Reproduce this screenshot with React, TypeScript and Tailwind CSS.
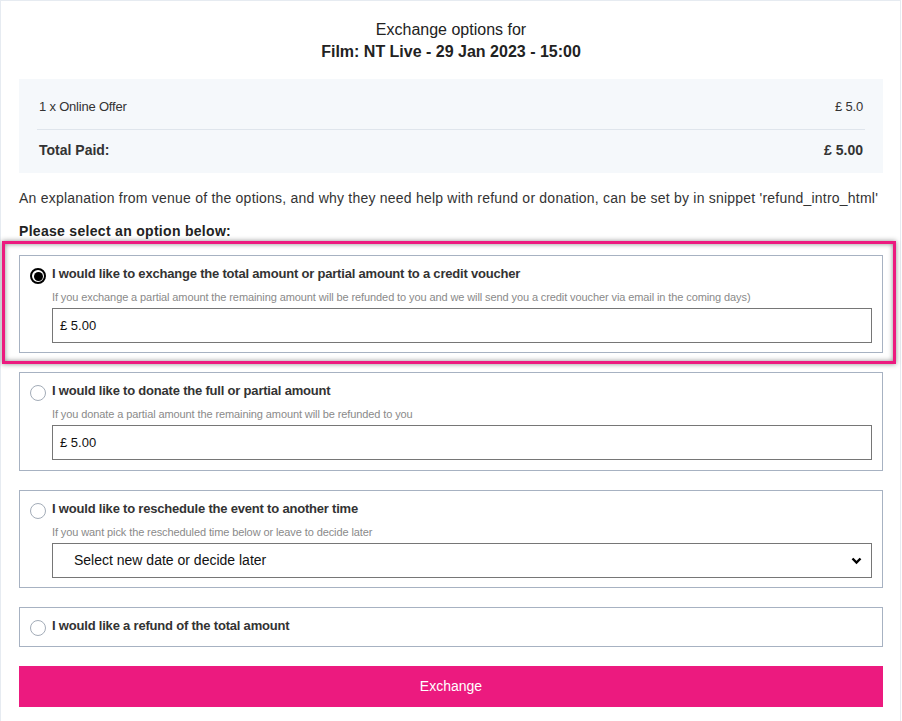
import React from "react";

const font = { fontFamily: '"Liberation Sans", Arial, sans-serif' };

function Radio({ checked }: { checked?: boolean }) {
  if (checked) {
    return (
      <span className="mt-[2px] flex h-[16px] w-[16px] shrink-0 items-center justify-center rounded-full border-2 border-black bg-white">
        <span className="h-[9px] w-[9px] rounded-full bg-black" />
      </span>
    );
  }
  return <span className="mt-[2px] h-[16px] w-[16px] shrink-0 rounded-full border border-[#a3acb8] bg-white" />;
}

function OptionHead({ label, checked }: { label: string; checked?: boolean }) {
  return (
    <div className="flex items-start gap-[6px]">
      <Radio checked={checked} />
      <span className="text-[13px] font-bold leading-[16px] tracking-[-0.2px] text-[#333]">{label}</span>
    </div>
  );
}

function Sub({ text }: { text: string }) {
  return <div className="mt-[5px] pl-[22px] text-[11px] leading-[16px] tracking-[-0.1px] text-[#8a8a8a]">{text}</div>;
}

function AmountInput() {
  return (
    <div className="ml-[22px] mt-[3px] flex h-[35px] items-center border border-[#767676] bg-white pl-[7px] text-[13px] text-[#111]">
      £ 5.00
    </div>
  );
}

export default function App() {
  return (
    <div className="min-h-[721px] w-[901px] border-l border-r border-t border-[#e6ebf1] bg-white pb-[15px] pl-[18px] pr-[17px]" style={font}>
      <div className="pt-[18px] text-center text-[16px] leading-[22px] text-[#222]">
        <div>Exchange options for</div>
        <div className="font-bold">Film: NT Live - 29 Jan 2023 - 15:00</div>
      </div>

      <div className="mt-[16px] bg-[#f5f8fb] px-[18px] pb-[13px] pt-[18px] text-[#333]">
        <div className="flex justify-between px-[2px] pb-[12px] text-[13px] leading-[20px] tracking-[-0.2px]">
          <span>1 x Online Offer</span>
          <span>£ 5.0</span>
        </div>
        <div className="border-t border-[#dfe5ec]" />
        <div className="mt-[10px] flex justify-between px-[2px] text-[14px] font-bold leading-[20px]">
          <span>Total Paid:</span>
          <span>£ 5.00</span>
        </div>
      </div>

      <p className="mt-[15px] text-[14px] leading-[20px] tracking-[0.22px] text-[#333]">
        An explanation from venue of the options, and why they need help with refund or donation, can be set by in snippet 'refund_intro_html'
      </p>
      <div className="mt-[13px] text-[14px] font-bold leading-[20px] tracking-[0.3px] text-[#222]">Please select an option below:</div>

      <div className="mt-[14px] flex flex-col gap-[19px]">
        <div className="relative">
          <div className="border border-[#a7b2c2] px-[10px] pb-[9px] pt-[10px]">
            <OptionHead checked label="I would like to exchange the total amount or partial amount to a credit voucher" />
            <Sub text="If you exchange a partial amount the remaining amount will be refunded to you and we will send you a credit voucher via email in the coming days)" />
            <AmountInput />
          </div>
          <div className="pointer-events-none absolute -bottom-[11px] -left-[17px] -right-[13px] -top-[14px] border-[3px] border-[#ec1a7f] shadow-[0_0_5px_rgba(0,0,0,0.45),inset_0_0_5px_rgba(0,0,0,0.45)]" />
        </div>

        <div className="border border-[#a7b2c2] px-[10px] pb-[10px] pt-[10px]">
          <OptionHead label="I would like to donate the full or partial amount" />
          <Sub text="If you donate a partial amount the remaining amount will be refunded to you" />
          <AmountInput />
        </div>

        <div className="border border-[#a7b2c2] px-[10px] pb-[9px] pt-[10px]">
          <OptionHead label="I would like to reschedule the event to another time" />
          <Sub text="If you want pick the rescheduled time below or leave to decide later" />
          <div className="ml-[22px] mt-[3px] flex h-[35px] items-center justify-between border border-[#767676] bg-white pl-[21px] pr-[9px] text-[14px] text-[#111]">
            <span>Select new date or decide later</span>
            <svg width="11" height="8" viewBox="0 0 11 8">
              <path d="M1.5 1.5l4 4 4-4" fill="none" stroke="#000" strokeWidth="2.4" />
            </svg>
          </div>
        </div>

        <div className="border border-[#a7b2c2] px-[10px] pb-[10px] pt-[10px]">
          <OptionHead label="I would like a refund of the total amount" />
        </div>

        <button className="flex h-[41px] w-full items-center justify-center bg-[#ec1a7f] text-[14px] text-white">
          Exchange
        </button>
      </div>
    </div>
  );
}
